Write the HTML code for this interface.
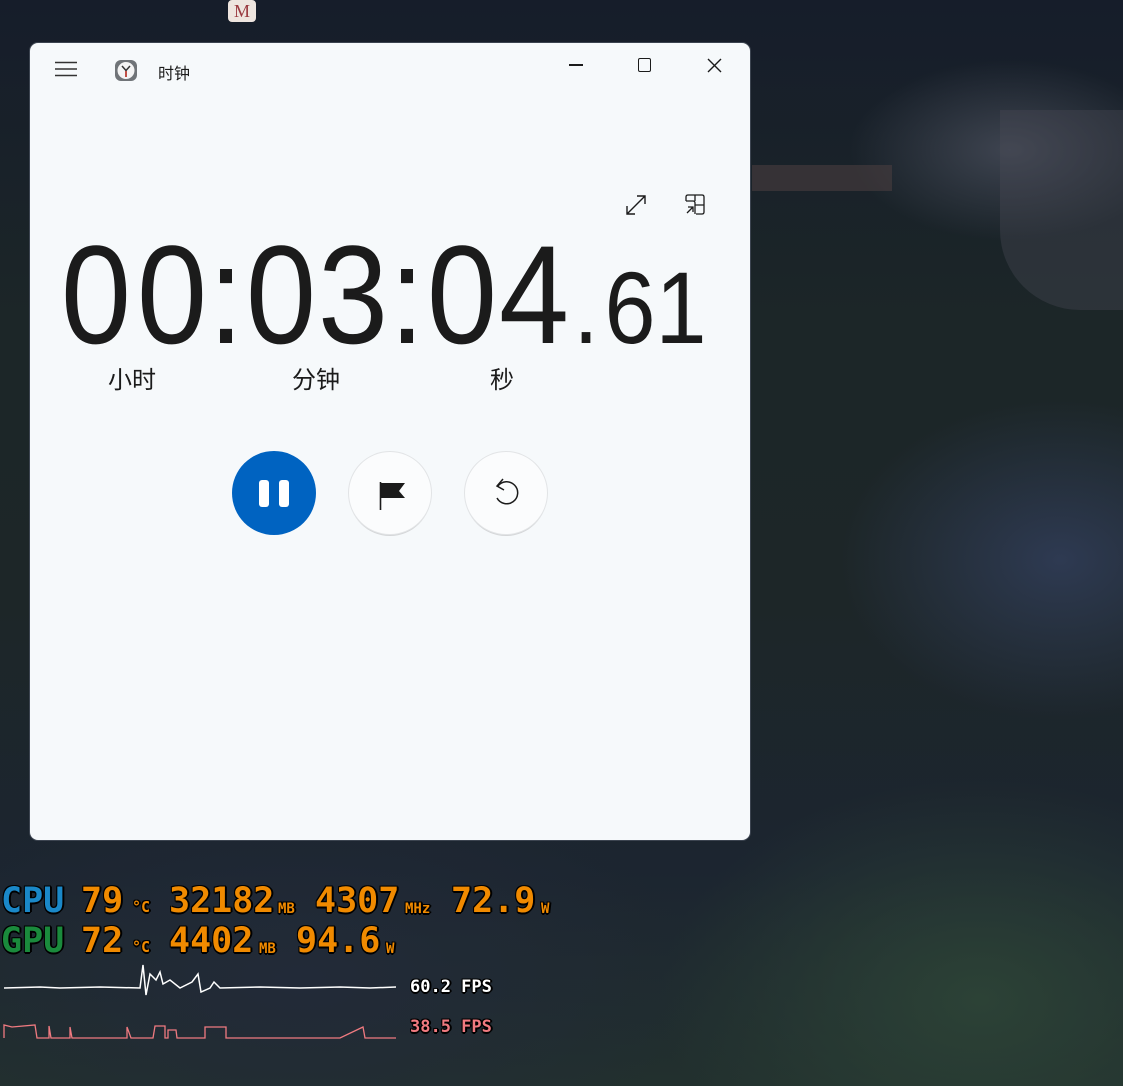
<!DOCTYPE html>
<html><head><meta charset="utf-8"><style>
html,body{margin:0;padding:0}
body{width:1123px;height:1086px;position:relative;overflow:hidden;font-family:"Liberation Sans","Noto Sans CJK SC",sans-serif;
background:
radial-gradient(ellipse 160px 90px at 1010px 150px,#3e4450 0%,rgba(62,68,80,0) 100%),
radial-gradient(ellipse 220px 160px at 1060px 560px,#2e3a52 0%,rgba(46,58,82,0) 100%),
radial-gradient(ellipse 320px 220px at 980px 1000px,#2c4236 0%,rgba(44,66,54,0) 100%),
radial-gradient(ellipse 400px 200px at 300px 980px,#222a38 0%,rgba(34,42,56,0) 100%),
linear-gradient(180deg,#161d2a 0%,#1c2628 30%,#1d2628 55%,#1c2530 80%,#22302e 100%);}
.w{position:absolute;left:30px;top:43px;width:720px;height:797px;background:#f6f9fb;border-radius:8px;box-shadow:0 0 0 1px #3c4450}
.a{position:absolute;color:#1b1b1b;line-height:1;transform:translateX(-50%) scaleX(.9);white-space:nowrap}
.b{font-size:140px;top:182px}
.s{font-size:102px;top:214px}
.lbl{position:absolute;top:326px;font-size:24px;color:#1b1b1b;line-height:1}
.btn{position:absolute;top:409px;width:82px;height:82px;border-radius:50%;background:#fbfcfd;box-shadow:0 0 0 1px #e2e4e6,0 2px 0 #d4d6d8}
.osd{position:absolute;font-family:"DejaVu Sans Mono","Liberation Mono",monospace;font-weight:bold;line-height:1;
text-shadow:-1px -1px 0 #000,1px -1px 0 #000,-1px 1px 0 #000,1px 1px 0 #000,2px 0 0 #000,0 2px 0 #000}
</style></head><body>
<div style="position:absolute;left:752px;top:165px;width:140px;height:26px;background:#4a3e40;opacity:.6"></div>
<div style="position:absolute;left:1000px;top:110px;width:123px;height:200px;background:#4c4e58;opacity:.35;border-radius:0 0 0 80px"></div>
<div style="position:absolute;left:228px;top:0;width:28px;height:22px;background:#eee5df;border-radius:4px;color:#9a3a40;font:18px 'Liberation Serif',serif;text-align:center;line-height:22px">M</div>

<div class="w">
 <svg style="position:absolute;left:25px;top:18px" width="22" height="16"><path d="M0 1.5H22M0 8H22M0 14.5H22" stroke="#333" stroke-width="1.5"/></svg>
 <svg style="position:absolute;left:84px;top:15px" width="24" height="24"><rect x="1" y="2" width="22" height="21" rx="6" fill="#707478"/><circle cx="12" cy="12.5" r="8.5" fill="#f4f4f4"/><path d="M8 8L12 12.5L16 8M12 12.5V19" stroke="#333" stroke-width="1.5" fill="none"/><path d="M12 13V19" stroke="#d0382c" stroke-width="1.5"/></svg>
 <div style="position:absolute;left:128px;top:17px;font-size:16px;color:#1b1b1b">时钟</div>
 <div style="position:absolute;left:539px;top:21px;width:14px;height:1.5px;background:#1b1b1b"></div>
 <div style="position:absolute;left:608px;top:15px;width:11px;height:12px;border:1.5px solid #1b1b1b;border-radius:2px"></div>
 <svg style="position:absolute;left:677px;top:15px" width="15" height="15"><path d="M1 1L14 14M14 1L1 14" stroke="#1b1b1b" stroke-width="1.4"/></svg>
 <svg style="position:absolute;left:594px;top:150px" width="24" height="24"><path d="M3 21L21 3M13 3H21V11M3 13V21H11" stroke="#1b1b1b" stroke-width="1.4" fill="none"/></svg>
 <svg style="position:absolute;left:654px;top:151px" width="24" height="24"><path d="M2 7V3Q2 1 4 1H18Q20 1 20 3V18Q20 20 18 20H12M2 7H9Q11 7 11 9V20M11 7V1M11 11H20M3 19L9 13M4 13H9V18" stroke="#1b1b1b" stroke-width="1.3" fill="none"/></svg>

 <span class="a b" style="left:66px">0</span>
 <span class="a b" style="left:142px">0</span>
 <span class="a b" style="left:196px">:</span>
 <span class="a b" style="left:251px">0</span>
 <span class="a b" style="left:323px">3</span>
 <span class="a b" style="left:377px">:</span>
 <span class="a b" style="left:432px">0</span>
 <span class="a b" style="left:504px">4</span>
 <span class="a s" style="left:556px">.</span>
 <span class="a s" style="left:600px">6</span>
 <span class="a s" style="left:651px">1</span>

 <div class="lbl" style="left:78px">小时</div>
 <div class="lbl" style="left:262px">分钟</div>
 <div class="lbl" style="left:460px">秒</div>

 <div class="btn" style="left:202px;top:408px;width:84px;height:84px;background:#0063c1;box-shadow:none">
  <div style="position:absolute;left:27px;top:29px;width:10px;height:27px;background:#fff;border-radius:3px"></div>
  <div style="position:absolute;left:47px;top:29px;width:10px;height:27px;background:#fff;border-radius:3px"></div>
 </div>
 <div class="btn" style="left:319px">
  <svg style="position:absolute;left:28px;top:27px" width="28" height="32"><path d="M3 4H28L22 12L28 19H4" fill="#1b1b1b"/><path d="M3.5 3V31" stroke="#1b1b1b" stroke-width="1.6"/></svg>
 </div>
 <div class="btn" style="left:435px">
  <svg style="position:absolute;left:24px;top:24px" width="34" height="34"><path d="M9 10A11 11 0 1 1 8 22" stroke="#1b1b1b" stroke-width="1.5" fill="none"/><path d="M14 3L8 10L15 14" stroke="#1b1b1b" stroke-width="1.5" fill="none"/></svg>
 </div>
</div>

<div class="osd" style="left:1px;top:884px;font-size:35px;color:#1a88c8">CPU</div>
<div class="osd" style="left:81px;top:884px;font-size:35px;color:#f08a00">79</div>
<div class="osd" style="left:132px;top:900px;font-size:15px;color:#f08a00">°C</div>
<div class="osd" style="left:169px;top:884px;font-size:35px;color:#f08a00">32182</div>
<div class="osd" style="left:278px;top:902px;font-size:14px;color:#f08a00">MB</div>
<div class="osd" style="left:315px;top:884px;font-size:35px;color:#f08a00">4307</div>
<div class="osd" style="left:405px;top:902px;font-size:14px;color:#f08a00">MHz</div>
<div class="osd" style="left:451px;top:884px;font-size:35px;color:#f08a00">72.9</div>
<div class="osd" style="left:541px;top:902px;font-size:14px;color:#f08a00">W</div>
<div class="osd" style="left:1px;top:924px;font-size:35px;color:#1a8a3c">GPU</div>
<div class="osd" style="left:81px;top:924px;font-size:35px;color:#f08a00">72</div>
<div class="osd" style="left:132px;top:940px;font-size:15px;color:#f08a00">°C</div>
<div class="osd" style="left:169px;top:924px;font-size:35px;color:#f08a00">4402</div>
<div class="osd" style="left:259px;top:942px;font-size:14px;color:#f08a00">MB</div>
<div class="osd" style="left:296px;top:924px;font-size:35px;color:#f08a00">94.6</div>
<div class="osd" style="left:386px;top:942px;font-size:14px;color:#f08a00">W</div>
<svg style="position:absolute;left:0;top:960px" width="400" height="85">
<path d="M4 28L40 27L60 28L100 27L140 28L143 5L146 35L150 14L156 20L160 12L163 24L170 20L180 28L192 22L198 14L201 32L210 28L214 22L220 28L260 27L300 28L340 27L370 28L396 27" stroke="#fff" stroke-width="1.5" fill="none"/>
<path d="M4 78L4 65L12 67L35 65L37 78L49 78L49 66L51 78L70 78L70 67L72 78L127 78L127 67L131 78L153 78L155 66L165 66L165 78L168 78L168 70L176 70L177 78L205 78L205 67L226 67L226 78L340 78L363 67L365 78L396 78" stroke="#f07a80" stroke-width="1.3" fill="none"/>
</svg>
<div class="osd" style="left:410px;top:979px;font-size:17px;color:#fff">60.2 FPS</div>
<div class="osd" style="left:410px;top:1019px;font-size:17px;color:#f07a80">38.5 FPS</div>
</body></html>
